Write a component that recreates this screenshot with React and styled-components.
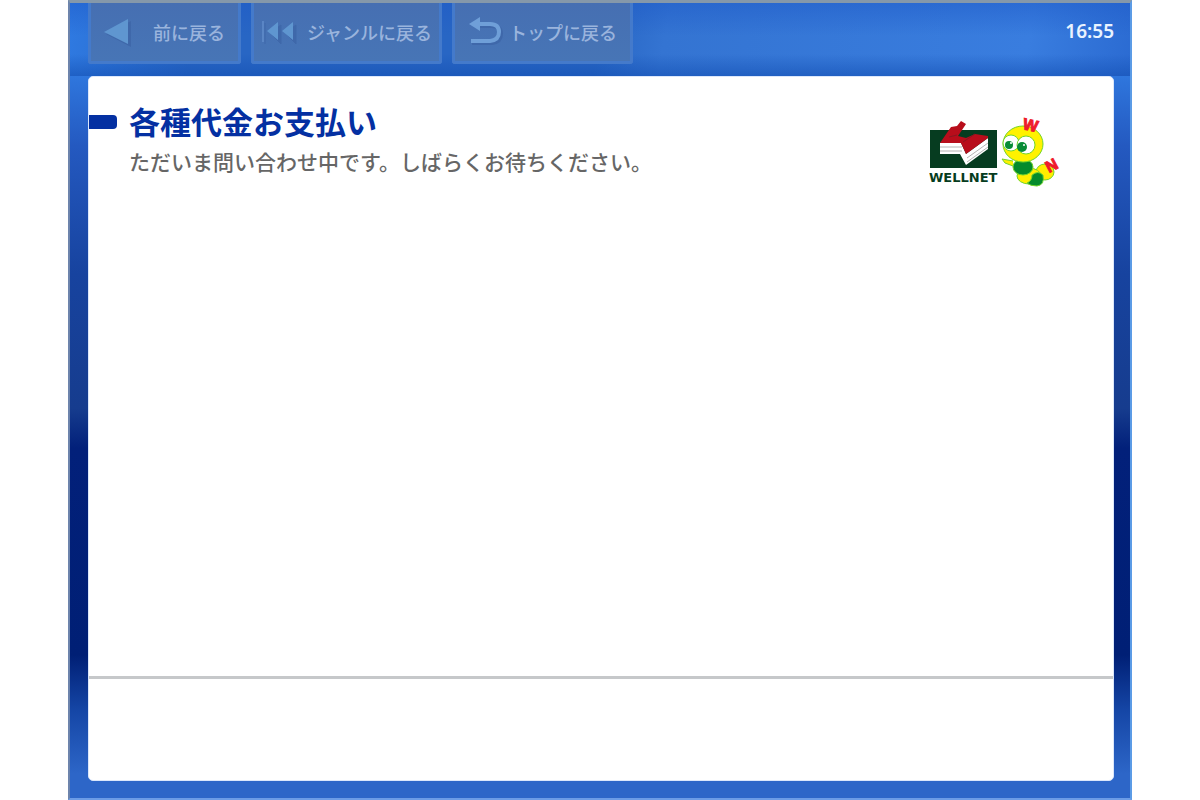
import React from "react";
import styled, { createGlobalStyle } from "styled-components";

const GlobalStyle = createGlobalStyle`
  * {
    box-sizing: border-box;
  }
  body {
    margin: 0;
    background: #fff;
    font-family: "Noto Sans CJK JP", "Noto Sans", sans-serif;
  }
`;

const Page = styled.div`
  min-height: 100vh;
  padding: 0 68px;
  display: flex;
`;

const Kiosk = styled.div`
  flex: 1;
  display: flex;
  flex-direction: column;
  padding: 0 16px 17px 18px;
  border: 2px solid #6d84ac;
  border-top: 3px solid #8598aa;
  border-right-color: #5b9be6;
  border-bottom-color: #6c9ce6;
  background:
    linear-gradient(180deg, rgba(30, 90, 200, 0.5), rgba(30, 90, 200, 0) 45%, rgba(20, 80, 180, 0) 70%, rgba(20, 80, 180, 0.6)) top / 100% 73px no-repeat,
    linear-gradient(100deg, #2f7ae2 0%, #2866c4 12%, #2866c4 50%, #3474d2 56%, #397ddf 90%, #2b6bd2 100%) top / 100% 73px no-repeat,
    linear-gradient(
      180deg,
      #2f77de 9%,
      #2459c0 18%,
      #17439f 34%,
      #163c8e 51%,
      #02207a 56%,
      #001f75 82%,
      #1546a6 89%,
      #2d66c8 97%
    );
`;

const TopBar = styled.header`
  height: 73px;
  display: flex;
  justify-content: space-between;
  align-items: flex-start;
`;

const Nav = styled.nav`
  display: flex;
  gap: 10px;
`;

const NavButton = styled.button`
  width: ${(props) => props.$width}px;
  height: 61px;
  padding: 0 ${(props) => (props.$tight ? 7 : 13)}px;
  display: flex;
  justify-content: space-between;
  align-items: center;
  border: 3px solid #447acb;
  border-top: none;
  border-radius: 0 0 3px 3px;
  background: linear-gradient(180deg, #466fb2, #4775b6);
  color: #9ab4dd;
  font-family: inherit;
  font-size: 18px;
  font-weight: 500;
  line-height: 24px;
  white-space: nowrap;
`;

const Clock = styled.time`
  padding-top: 16px;
  color: #e9f3ff;
  font-family: "Noto Sans", sans-serif;
  font-size: 19px;
  font-weight: 600;
  line-height: 24px;
`;

const Panel = styled.main`
  flex: 1;
  display: flex;
  flex-direction: column;
  border: 1px solid #dbe7fb;
  border-radius: 5px;
  background: #fff;
`;

const Content = styled.section`
  flex: 1;
  display: flex;
  justify-content: space-between;
  align-items: flex-start;
  padding: 26px 52px 0 0;
`;

const Heading = styled.div`
  display: grid;
  grid-template-columns: 28px auto;
  column-gap: 12px;
  align-items: center;
`;

const Marker = styled.span`
  height: 14px;
  margin-top: 2px;
  border-radius: 0 4px 4px 0;
  background: #0430a2;
`;

const Title = styled.h1`
  margin: 0;
  color: #0430a2;
  font-size: 31px;
  font-weight: 700;
  line-height: 36px;
`;

const Message = styled.p`
  grid-column: 2;
  margin: 0;
  color: #666;
  font-size: 21px;
  font-weight: 500;
  line-height: 44px;
`;

const Brand = styled.div`
  display: flex;
  padding-top: 12px;
`;

const Footer = styled.footer`
  height: 104px;
  border-top: 3px solid #c6c8ca;
`;

const BackIcon = () => (
  <svg width="28" height="32" viewBox="0 0 28 32" aria-hidden="true">
    <path d="M2 18 L27 5 V31 Z" fill="#3f68aa" />
    <path d="M0 16 L24 3 V28 Z" fill="#5f96d0" />
  </svg>
);

const GenreIcon = () => (
  <svg width="38" height="30" viewBox="0 0 38 30" aria-hidden="true">
    <path d="M4 6 V27 M9 16 L20 8 V27 Z M24 16 L35 8 V27 Z" fill="#3f68aa" stroke="#3f68aa" />
    <path d="M2 4 V25" stroke="#6f9ad6" strokeWidth="1" />
    <path d="M6 14 L17 5 V23 Z M21 14 L32 5 V23 Z" fill="#5f96d0" />
  </svg>
);

const TopIcon = () => (
  <svg width="36" height="32" viewBox="0 0 36 32" fill="none" aria-hidden="true">
    <path d="M10 10 H24 Q33 10 33 18 T24 27 H4" stroke="#3f68aa" strokeWidth="4" />
    <path d="M8 8 H22 Q31 8 31 16 T22 25 H3" stroke="#6f9fd8" strokeWidth="4" />
    <path d="M1 8 L12 1 V15 Z" fill="#6f9fd8" />
  </svg>
);

const WellnetLogo = () => (
  <svg width="72" height="72" viewBox="0 0 72 72" role="img" aria-label="WELLNET">
    <rect x="1" y="15" width="67" height="38" fill="#063c20" />
    <path d="M11 28 H32 L37 39 L59 23 V34 L37 50 L31 39 H11 Z" fill="#fff" />
    <path d="M11 32 H33 M11 36 H33 M38 43 L59 28 M38 47 L59 32" stroke="#b4b4b4" />
    <path
      d="M11 28 L22 12 L28 11 L32 6 L37 9 L29 21 L37 23 L46 19 L59 21 V23 L37 39 L32 28 Z"
      fill="#b80d1b"
    />
    <path d="M20 22 L28 20 M34 27 L46 19" stroke="#8a1520" strokeWidth="1" />
    <text x="0" y="67" fill="#063c20" fontFamily="DejaVu Sans, sans-serif" fontSize="13" fontWeight="700">
      WELLNET
    </text>
  </svg>
);

const Mascot = () => (
  <svg width="60" height="72" viewBox="0 0 60 72" aria-hidden="true">
    <g stroke="#72d52c" strokeWidth="1">
      <ellipse cx="44" cy="57" rx="9" ry="8" fill="#ffed00" />
      <ellipse cx="28" cy="61" rx="12" ry="8" fill="#ffef00" />
      <ellipse cx="22" cy="52" rx="10" ry="8" fill="#058b2c" />
      <path d="M26 68 Q31 66 31 60 Q37 55 42 60 Q44 70 36 71 Q29 71 26 68 Z" fill="#058b2c" />
      <path d="M12 46 L1 44 L4 48 L12 51" fill="#fff000" />
      <ellipse cx="22" cy="29" rx="20" ry="18" fill="#fff200" />
      <circle cx="10" cy="28" r="8" fill="#fff" />
      <circle cx="25" cy="30" r="9" fill="#fff" />
    </g>
    <circle cx="8" cy="30" r="4" fill="#078c36" />
    <circle cx="21" cy="32" r="5" fill="#078c36" />
    <circle cx="10" cy="28" r="1" fill="#fff" />
    <circle cx="23" cy="30" r="1" fill="#fff" />
    <g
      fill="#ee1b2b"
      stroke="#ee1b2b"
      strokeWidth="1"
      fontFamily="Liberation Sans, sans-serif"
      fontSize="16"
      fontWeight="700"
    >
      <text x="21" y="14" transform="rotate(12 21 14)">W</text>
      <text x="48" y="58" transform="rotate(-28 48 58)">N</text>
    </g>
  </svg>
);

const App = () => {
  return (
    <>
      <GlobalStyle />
      <Page>
        <Kiosk>
          <TopBar>
            <Nav>
              <NavButton type="button" $width={153}>
                <BackIcon />
                前に戻る
              </NavButton>
              <NavButton type="button" $width={191} $tight>
                <GenreIcon />
                ジャンルに戻る
              </NavButton>
              <NavButton type="button" $width={181}>
                <TopIcon />
                トップに戻る
              </NavButton>
            </Nav>
            <Clock>16:55</Clock>
          </TopBar>
          <Panel>
            <Content>
              <Heading>
                <Marker />
                <Title>各種代金お支払い</Title>
                <Message>ただいま問い合わせ中です。しばらくお待ちください。</Message>
              </Heading>
              <Brand>
                <WellnetLogo />
                <Mascot />
              </Brand>
            </Content>
            <Footer />
          </Panel>
        </Kiosk>
      </Page>
    </>
  );
};

export default App;
